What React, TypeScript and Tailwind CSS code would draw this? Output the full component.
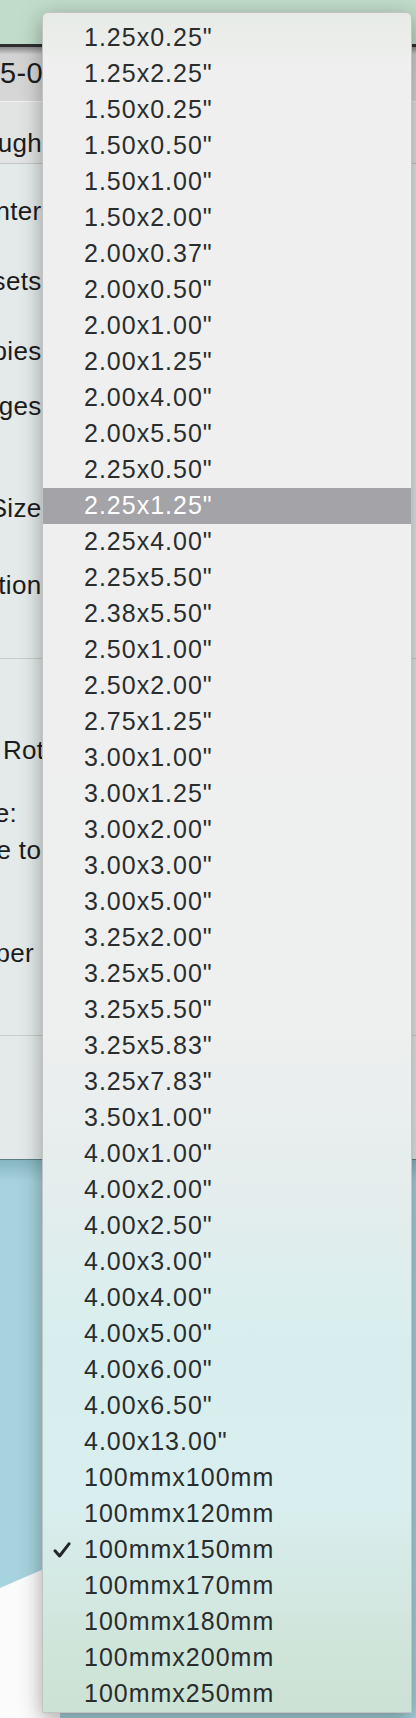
import React from "react";

const SIZES = [
  '1.25x0.25"', '1.25x2.25"', '1.50x0.25"', '1.50x0.50"', '1.50x1.00"', '1.50x2.00"',
  '2.00x0.37"', '2.00x0.50"', '2.00x1.00"', '2.00x1.25"', '2.00x4.00"', '2.00x5.50"',
  '2.25x0.50"', '2.25x1.25"', '2.25x4.00"', '2.25x5.50"', '2.38x5.50"', '2.50x1.00"',
  '2.50x2.00"', '2.75x1.25"', '3.00x1.00"', '3.00x1.25"', '3.00x2.00"', '3.00x3.00"',
  '3.00x5.00"', '3.25x2.00"', '3.25x5.00"', '3.25x5.50"', '3.25x5.83"', '3.25x7.83"',
  '3.50x1.00"', '4.00x1.00"', '4.00x2.00"', '4.00x2.50"', '4.00x3.00"', '4.00x4.00"',
  '4.00x5.00"', '4.00x6.00"', '4.00x6.50"', '4.00x13.00"',
  "100mmx100mm", "100mmx120mm", "100mmx150mm", "100mmx170mm", "100mmx180mm",
  "100mmx200mm", "100mmx250mm",
];

const HOVERED = '2.25x1.25"';
const CHECKED = "100mmx150mm";

const FONT = "font-['Liberation_Sans',Arial,sans-serif]";

function Check() {
  return (
    <svg width="18" height="16" viewBox="0 0 18 16" aria-hidden>
      <path
        d="M2 8.8 L6.6 14 L16 1.8"
        fill="none"
        stroke="#222626"
        strokeWidth="3"
        strokeLinecap="round"
        strokeLinejoin="round"
      />
    </svg>
  );
}

// label that ends at a given x, overflowing to the left
function Label({ text, className }: { text: string; className: string }) {
  return (
    <div className={`flex h-[36px] items-center justify-end ${className}`}>
      <span className="whitespace-nowrap">{text}</span>
    </div>
  );
}

function PrintWindow() {
  return (
    <div className={`flex h-[1116px] flex-col bg-[#e4e9e9] text-[26px] tracking-[0.3px] text-[#1c1c1c] ${FONT}`}>
      <div className="h-[3px] bg-[#2e2e2e]" />
      <div className="flex h-[54px] items-center bg-[linear-gradient(to_bottom,#8a8a8a,#d3d2d3_14%,#d8d7d8)] text-[29px]">
        <span className="whitespace-nowrap">5-05.pdf</span>
      </div>
      <div className="h-px bg-[#f2f2f2]" />
      <div className="flex h-[62px] items-end border-b border-[#c4c6c6] bg-[#e2e3e3]">
        <div className="flex w-[42px] justify-end">
          <span className="whitespace-nowrap">Pass through</span>
        </div>
      </div>
      <Label text="Printer:" className="mt-[29px] w-[49px]" />
      <Label text="Presets:" className="mt-[34px] w-[49px]" />
      <Label text="Copies:" className="mt-[34px] w-[49px]" />
      <Label text="Pages:" className="mt-[19px] w-[49px]" />
      <Label text="Paper Size:" className="mt-[66px] w-[49px]" />
      <Label text="Orientation:" className="mt-[41px] w-[49px]" />
      <div className="mt-[55px] h-px bg-[#c9cccc]" />
      <div className="mt-[73px] flex h-[36px] items-center">
        <div className="flex w-[3px] justify-end">
          <span className="whitespace-nowrap">Auto&nbsp;</span>
        </div>
        <span className="whitespace-nowrap">Rotate</span>
      </div>
      <Label text="Scale:" className="mt-[27px] w-[17px]" />
      <Label text="Scale to Fit:" className="mt-px w-[86px]" />
      <Label text="Paper" className="mt-[67px] w-[34px]" />
      <div className="mt-[64px] h-px bg-[#c9cccc]" />
      <div className="flex-1" />
      <div className="h-px bg-[#5b7d86]" />
    </div>
  );
}

function Menu() {
  return (
    <div
      className={`absolute left-[42px] top-[12px] w-[370px] rounded-t-[6px] border border-[#c2c4c2] bg-[linear-gradient(to_bottom,#e7ebe7_0%,#eeefee_3%,#efefef_40%,#eeefef_60%,#e6eded_68%,#d8eeee_78%,#d9eeee_88%,#cfe5da_96%,#cbe2d4_100%)] pt-[7px] shadow-[0_6px_22px_rgba(0,0,0,0.35)] ${FONT}`}
    >
      {SIZES.map((s) => {
        const hovered = s === HOVERED;
        return (
          <div
            key={s}
            className={`flex h-[36px] items-center text-[25px] tracking-[1px] ${
              hovered ? "bg-[#a4a3a8] text-white" : "text-[#2a2d2d]"
            }`}
          >
            <div className="flex w-[41px] items-center pl-[10px]">
              {s === CHECKED && <Check />}
            </div>
            <span className="whitespace-nowrap">{s}</span>
          </div>
        );
      })}
    </div>
  );
}

export default function App() {
  return (
    <div className="relative h-[1718px] w-[416px] overflow-hidden">
      <div className="flex h-full flex-col">
        <div className="h-[44px] bg-[#c1dccb]" />
        <PrintWindow />
        <div className="relative flex-1 bg-[linear-gradient(to_bottom,#86b6c1,#a6d3de_22px,#a6d3de)]">
          <svg className="absolute bottom-0 left-0" width="416" height="160" viewBox="0 0 416 160" aria-hidden>
            <polygon points="0,30 60,4 60,160 0,160" fill="#fbfbfb" />
          </svg>
        </div>
      </div>
      <Menu />
    </div>
  );
}
